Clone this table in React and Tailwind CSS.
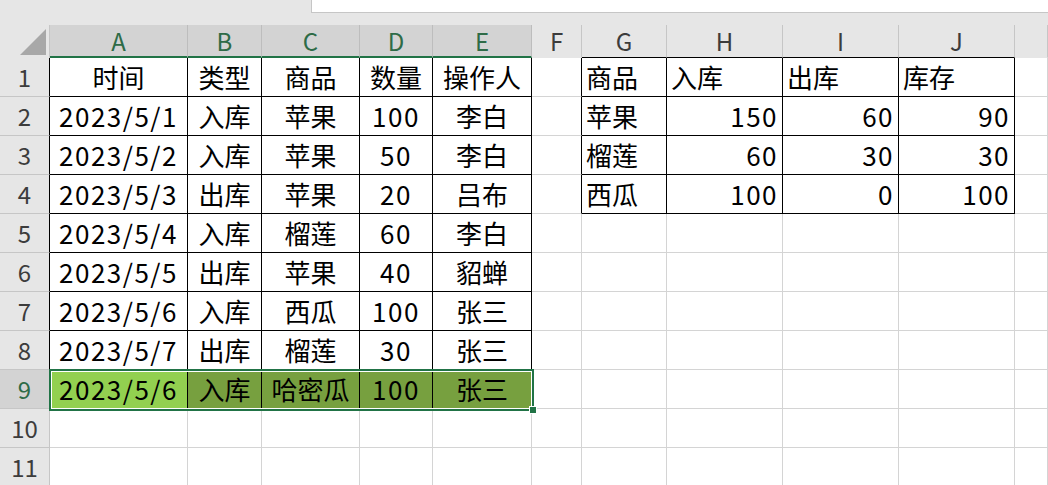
import React from 'react';

const colNames = ['A', 'B', 'C', 'D', 'E', 'F', 'G', 'H', 'I', 'J', ''];

const left = [
  ['时间', '类型', '商品', '数量', '操作人'],
  ['2023/5/1', '入库', '苹果', '100', '李白'],
  ['2023/5/2', '入库', '苹果', '50', '李白'],
  ['2023/5/3', '出库', '苹果', '20', '吕布'],
  ['2023/5/4', '入库', '榴莲', '60', '李白'],
  ['2023/5/5', '出库', '苹果', '40', '貂蝉'],
  ['2023/5/6', '入库', '西瓜', '100', '张三'],
  ['2023/5/7', '出库', '榴莲', '30', '张三'],
  ['2023/5/6', '入库', '哈密瓜', '100', '张三'],
];

const right = [
  ['商品', '入库', '出库', '库存'],
  ['苹果', '150', '60', '90'],
  ['榴莲', '60', '30', '30'],
  ['西瓜', '100', '0', '100'],
];

const isNum = (v) => /^[0-9/]+$/.test(v);

const valueAt = (r, c) => {
  if (r <= 9 && c <= 4) return left[r - 1][c];
  if (r <= 4 && c >= 6 && c <= 9) return right[r - 1][c - 6];
  return '';
};

const Cell = ({ r, c }) => {
  const inLeft = r <= 9 && c <= 4;
  const inRight = r <= 4 && c >= 6 && c <= 9;
  const blackR = inLeft || inRight || (c === 5 && r <= 4);
  const blackB = inLeft || inRight;
  const v = valueAt(r, c);

  let align = 'justify-center';
  if (c === 6) align = 'justify-start pl-1';
  if (c >= 7 && c <= 9) align = r === 1 ? 'justify-start pl-1' : 'justify-end pr-1';

  let bg = 'bg-white';
  if (r === 9 && c === 0) bg = 'bg-[#92d050]';
  else if (r === 9 && c <= 4) bg = 'bg-[#77a03f]';

  return (
    <div
      className={`h-[39px] flex items-center overflow-visible whitespace-nowrap border-r border-b text-[26px] leading-none text-black ${align} ${bg} ${
        blackR ? 'border-r-black' : 'border-r-[#d4d4d4]'
      } ${blackB ? 'border-b-black' : 'border-b-[#d4d4d4]'} ${isNum(v) ? 'tracking-[1.5px]' : ''}`}
    >
      {v}
    </div>
  );
};

export default function App() {
  const rows = [1, 2, 3, 4, 5, 6, 7, 8, 9, 10, 11];

  return (
    <div className="w-[1048px] h-[485px] overflow-hidden bg-[#e6e6e6] font-['Noto_Sans_CJK_SC',sans-serif]">
      {/* formula bar edge */}
      <div className="h-[25px] flex">
        <div className="w-[311px]" />
        <div className="flex-1 h-[13px] bg-white border-l border-b border-[#c6c6c6]" />
      </div>

      <div className="relative grid grid-cols-[50px_138px_74px_98px_73px_99px_50px_85px_116px_116px_116px_1fr]">
        {/* column headers */}
        <div className="h-[33px] relative border-r border-[#c6c6c6]">
          <svg width="50" height="33" className="absolute left-0 top-0">
            <polygon points="20,30 46,30 46,4" fill="#a8a8a8" />
          </svg>
        </div>
        {colNames.map((n, i) =>
          i <= 4 ? (
            <div
              key={i}
              className="h-[33px] flex items-center justify-center bg-[#d3d3d3] text-[#2e6b47] text-[24px] leading-none border-r border-r-[#bdbdbd] border-b-2 border-b-[#217346]"
            >
              {n}
            </div>
          ) : (
            <div
              key={i}
              className={`h-[33px] flex items-center justify-center text-[#3c3c3c] text-[24px] leading-none border-r border-r-[#c6c6c6] border-b ${
                i >= 6 && i <= 9 ? 'border-b-black' : 'border-b-[#e6e6e6]'
              }`}
            >
              {n}
            </div>
          )
        )}

        {rows.map((r) => (
          <React.Fragment key={r}>
            <div
              className={`h-[39px] flex items-center justify-center text-[24px] leading-none border-r border-b border-b-[#c6c6c6] ${
                r === 9 ? 'bg-[#d3d3d3] text-[#2e6b47]' : 'bg-[#e6e6e6] text-[#3c3c3c]'
              } ${r <= 9 ? 'border-r-black' : 'border-r-[#c6c6c6]'}`}
            >
              {r}
            </div>
            {colNames.map((_, c) => (
              <Cell key={c} r={r} c={c} />
            ))}
          </React.Fragment>
        ))}

        {/* selection A9:E9 */}
        <div className="absolute left-[49px] top-[344px] w-[485px] h-[42px] border-2 border-[#217346] shadow-[inset_0_0_0_1px_#ffffff] pointer-events-none">
          <div className="absolute -right-[5px] -bottom-[5px] w-[8px] h-[8px] bg-[#217346] border border-white" />
        </div>
      </div>
    </div>
  );
}
